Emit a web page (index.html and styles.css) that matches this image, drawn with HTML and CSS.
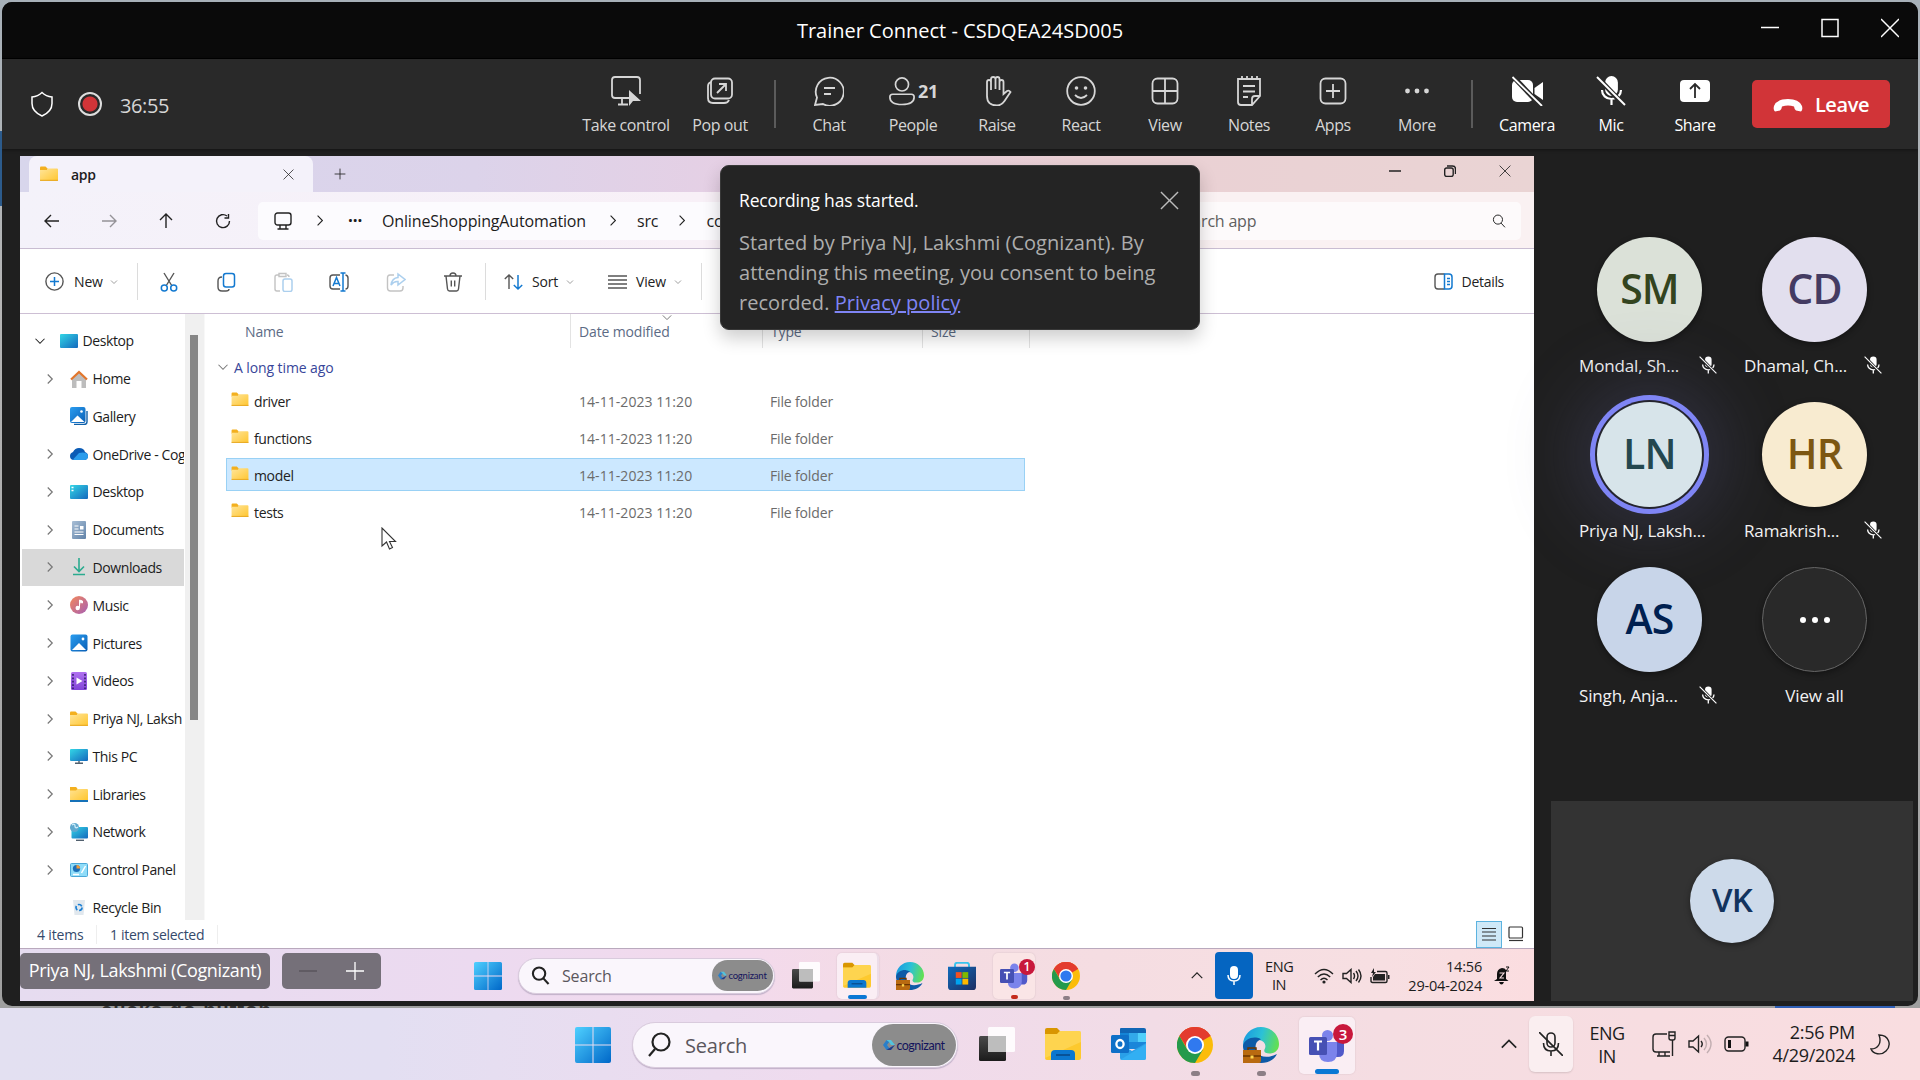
FILE: index.html
```html
<!DOCTYPE html>
<html lang="en">
<head>
<meta charset="utf-8">
<title>Trainer Connect - CSDQEA24SD005</title>
<link rel="stylesheet" href="styles.css">
</head>
<body>
<svg class="defs" width="0" height="0" aria-hidden="true">
  <defs>
    <linearGradient id="gWin" x1="0" y1="0" x2="1" y2="1"><stop offset="0" stop-color="#4fd0ff"/><stop offset="1" stop-color="#0067c8"/></linearGradient>
    <linearGradient id="gFolder" x1="0" y1="0" x2="1" y2="1"><stop offset="0" stop-color="#ffe59a"/><stop offset="1" stop-color="#ffc62f"/></linearGradient>
    <linearGradient id="gDesk" x1="0" y1="0" x2="1" y2="1"><stop offset="0" stop-color="#33d6e6"/><stop offset="1" stop-color="#1468bd"/></linearGradient>
    <linearGradient id="gBlue" x1="0" y1="0" x2="1" y2="1"><stop offset="0" stop-color="#2a9df0"/><stop offset="1" stop-color="#0a5fb5"/></linearGradient>
    <linearGradient id="gMusic" x1="0" y1="0" x2="1" y2="1"><stop offset="0" stop-color="#f4885a"/><stop offset="1" stop-color="#a65fb4"/></linearGradient>
    <linearGradient id="gEdge" x1="0" y1="0.3" x2="1" y2="0.5"><stop offset="0" stop-color="#1a9be0"/><stop offset=".5" stop-color="#2cc1d6"/><stop offset="1" stop-color="#63e052"/></linearGradient>
    <linearGradient id="gStore" x1="0" y1="0" x2="1" y2="1"><stop offset="0" stop-color="#0f6cbd"/><stop offset="1" stop-color="#1d2f63"/></linearGradient>
    <linearGradient id="gDoc" x1="0" y1="0" x2="1" y2="1"><stop offset="0" stop-color="#a9bfd6"/><stop offset="1" stop-color="#6082a8"/></linearGradient>
    <linearGradient id="gVid" x1="0" y1="0" x2="0" y2="1"><stop offset="0" stop-color="#b070f0"/><stop offset="1" stop-color="#8145d8"/></linearGradient>
    <linearGradient id="gDark" x1="0" y1="0" x2="0" y2="1"><stop offset="0" stop-color="#4a4a4a"/><stop offset="1" stop-color="#1b1b1b"/></linearGradient>
  </defs>
  <symbol id="winlogo" viewBox="0 0 36 36"><path fill="url(#gWin)" d="M2 0h15.500v17.500H0V2q0-2 2-2zM18.500 0H34q2 0 2 2v15.500H18.500zM0 18.500h17.500V36H2q-2 0-2-2zM18.500 18.500H36V34q0 2-2 2H18.500z"/></symbol>
  <symbol id="taskview" viewBox="0 0 36 36"><rect x="0" y="9" width="27" height="25" rx="1.500" fill="url(#gDark)"/><rect x="9" y="0" width="27" height="25" rx="1.500" fill="#fff" fill-opacity=".88"/><path d="M9 9h18v16H9z" fill="#bdbdbd"/></symbol>
  <symbol id="explorer" viewBox="0 0 36 36"><path d="M0 3q0-2 2-2h10l4 4-3 3H0z" fill="#d99600"/><path d="M0 7h12l3-3h19q2 0 2 2v25q0 2-2 2H2q-2 0-2-2z" fill="#fdc92e"/><path d="M0 7h12l3-3h19q2 0 2 2v9L0 31z" fill="#ffdc66" opacity=".6"/><path d="M6 33v-6q0-4 4-4h16q4 0 4 4v6z" fill="#0b77cf"/><path d="M11 28h14" stroke="#084a8a" stroke-width="1.600"/></symbol>
  <symbol id="chrome" viewBox="0 0 36 36"><circle cx="18" cy="18" r="18" fill="#fbbc09"/><path d="M18 18 2.400 9A18 18 0 0 1 33.600 9z" fill="#e33b2e"/><path d="M18 9h15.600A18 18 0 0 0 2.400 9L10 21z" fill="#e33b2e"/><path d="M2.400 9A18 18 0 0 0 18 36l8-13.500-8 3.500-8-4z" fill="#249a4c"/><circle cx="18" cy="18" r="9" fill="#fff"/><circle cx="18" cy="18" r="7.200" fill="#3079ef"/></symbol>
  <symbol id="edge" viewBox="0 0 36 36"><path d="M0 18C0 8 8 0 18 0s18 8 18 17c0 6-4 9.500-9.500 9.500-4 0-6-1.500-5-4 2-3 1-9-6-9.500C8 13 2 16 0 22z" fill="url(#gEdge)"/><path d="M0 19c1-6 7-9 13-8.500 4 .5 5 2 5 2-5 1-7 7-4 12.500 3 6 12 6 20 2-3 6-9 9-16 9C8 36 0 28 0 19z" fill="#0e5aa7"/><path d="M0 23h18v10.500q0 2.500-2 2.500H0z" fill="#b96a10"/><path d="M5 23v-2h8v2M0 29h18" stroke="#6b3500" stroke-width="1.500" fill="none"/><rect x="7.500" y="28.500" width="3" height="3" fill="#ffd54a"/></symbol>
  <symbol id="store" viewBox="0 0 36 36"><path d="M9 8V4q0-3 3-3h12q3 0 3 3v4" stroke="#38c3ee" stroke-width="2.500" fill="none"/><path d="M0 6h36v26q0 4-4 4H4q-4 0-4-4z" fill="url(#gStore)"/><path d="M10 13h7.500v7.500H10z" fill="#f25022"/><path d="M18.500 13H26v7.500h-7.500z" fill="#7fba00"/><path d="M10 21.500h7.500V29H10z" fill="#00a4ef"/><path d="M18.500 21.500H26V29h-7.500z" fill="#ffb900"/></symbol>
  <symbol id="teams" viewBox="0 0 36 36"><circle cx="18.500" cy="7.500" r="5.500" fill="#7b83eb"/><circle cx="30" cy="9" r="4" fill="#5059c9"/><path d="M24 14h11v9q0 6-6 6h-5z" fill="#5059c9"/><path d="M10 14h18v11q0 9-9 9t-9-9z" fill="#7b83eb"/><rect y="9" width="18" height="18" rx="1.500" fill="#4650b4"/><path d="M5 13.500h8M9 13.500v9" stroke="#fff" stroke-width="2.200"/></symbol>
  <symbol id="outlook" viewBox="0 0 36 36"><path d="M9 2q0-1 1-1h23q2 0 2 2v18H9z" fill="#1066b5"/><path d="M9 6h9v9H9z" fill="#1484d6"/><path d="M18 6h8.500v9H18z" fill="#32a9ea"/><path d="M26.500 6H35v9h-8.500z" fill="#50d0fb"/><path d="M18 15h17v7H18z" fill="#1a86d9"/><path d="M9 17l12 7 14-8v15q0 2-2 2H11q-2 0-2-2z" fill="#2aa0e8"/><path d="M9 33 35 17v14q0 2-2 2z" fill="#35b3f5" opacity=".8"/><rect y="8" width="18" height="18" rx="1.500" fill="#0f70c8"/><ellipse cx="9" cy="17" rx="3.600" ry="4" fill="none" stroke="#fff" stroke-width="2.300"/></symbol>
  <symbol id="hex" viewBox="0 0 12 12"><path d="M0 6 3.500 1l3 1.500L4 6l2.500 3.500L3.500 11z" fill="#2a7fc9"/><path d="M3.500 1H8l4 5H8L6 3z" fill="#53c3dd"/><path d="M12 6 8 11H3.500L8 8z" fill="#1c3a8c"/></symbol>

  <symbol id="mag" viewBox="0 0 20 20"><circle cx="8.500" cy="8" r="6.500"/><path d="M13 13l5.500 6"/></symbol>
  <symbol id="magL" viewBox="0 0 24 28"><circle cx="14" cy="11" r="8.500"/><path d="M8 18 2 25"/></symbol>
  <symbol id="x" viewBox="0 0 20 20"><path d="M1 1l18 18M19 1 1 19"/></symbol>
  <symbol id="plus" viewBox="0 0 20 20"><path d="M10 1v18M1 10h18"/></symbol>
  <symbol id="right" viewBox="0 0 10 16"><path d="M2 2l6 6-6 6"/></symbol>
  <symbol id="down" viewBox="0 0 16 10"><path d="M2 2l6 6 6-6"/></symbol>
  <symbol id="up" viewBox="0 0 16 10"><path d="M2 8l6-6 6 6"/></symbol>
  <symbol id="arrow" viewBox="0 0 16 16"><path d="M15 8H1M7 2 1 8l6 6"/></symbol>
  <symbol id="folder" viewBox="0 0 18 16"><path d="M0 1.500Q0 .5 1 .5h4.500l2 2V5H0z" fill="#f3b01f"/><path d="M0 4h7l1-1.500h9q1 0 1 1V14q0 1-1 1H1q-1 0-1-1z" fill="url(#gFolder)"/><path d="M0 14.300h18" stroke="#e6a722" stroke-width="1"/></symbol>

  <symbol id="micoff" viewBox="0 0 30 30"><rect x="10" y="1" width="11" height="18" rx="5.500" fill="currentColor"/><path d="M6 14c0 5 4 9 9.500 9s9.500-4 9.500-9M15.500 23v6" fill="none" stroke="currentColor" stroke-width="2.200"/><path d="M1.500 1.500l27 28" stroke="var(--cut,#292929)" stroke-width="5"/><path d="M1 1l28 28" stroke="currentColor" stroke-width="1.900"/></symbol>
</svg>

<div class="desktop">
  <div class="behind"><span class="behind-text">clicks go button</span><span class="behind-left"></span><span class="behind-blue"></span></div>

  <main class="meeting">
    <header class="titlebar">
      <h1>Trainer Connect - CSDQEA24SD005</h1>
      <div class="win-ctl">
        <svg class="ln" width="18" height="22" viewBox="0 0 18 22"><path d="M0 10.500h18"/></svg>
        <svg class="ln" width="18" height="22" viewBox="0 0 18 22"><path d="M1 2.500h16v17H1z"/></svg>
        <svg class="ln" width="18" height="22" viewBox="0 0 18 22"><path d="M0 2l18 18M18 2 0 20"/></svg>
      </div>
    </header>

    <nav class="toolbar">
      <div class="rec">
        <svg class="ln" width="24" height="26" viewBox="0 0 24 26"><path d="M12 1.500q4 4 10 4.500v6.500q0 8-10 12.500-10-4.500-10-12.500V6q6-.5 10-4.500z"/></svg>
        <span class="recdot"></span><span class="clock">36:55</span>
      </div>
      <div class="tool tool-wide"><svg class="ico" viewBox="0 0 30 30"><path d="M18 22H4q-3 0-3-3V4q0-3 3-3h22q3 0 3 3v14M11 22v6M7 28.500h10"/><path d="M18 14v16l4-5h8z" fill="currentColor" stroke="none"/></svg><span>Take control</span></div>
      <div class="tool tool-pop"><svg class="ico" viewBox="0 0 30 30"><rect x="6" y="2.500" width="21" height="20" rx="4"/><path d="M6 6q-3 1-3 4v12q0 5 5 5h11q4 0 5-3M12 17l9-9M14 8h7v7"/></svg><span>Pop out</span></div>
      <i class="sep"></i>
      <div class="tool"><svg class="ico" viewBox="0 0 30 30"><path d="M1 29l2-7.500A14 14 0 1 1 9 28z"/><path d="M10 12h11M10 18h7"/></svg><span>Chat</span></div>
      <div class="tool"><div class="people"><svg class="ico" viewBox="0 0 30 30"><circle cx="15" cy="8" r="7"/><path d="M5 18.500h20q3 0 3 3 0 8-13 8t-13-8q0-3 3-3z"/></svg><b>21</b></div><span>People</span></div>
      <div class="tool"><svg class="ico" viewBox="0 0 30 30"><path d="M5 16V6q0-2 2-2t2 2v8V3q0-2 2.200-2T13.500 3v10V3q0-2 2-2t2 2v11V6q0-2 2-2t2 2v12l3.500-3q2-1 3.500 1l-6 9q-3 4.500-7.500 4.500Q5 29.500 5 20z"/></svg><span>Raise</span></div>
      <div class="tool"><svg class="ico" viewBox="0 0 30 30"><circle cx="15" cy="15" r="13.800"/><path d="M9 19q6 6 12 0"/><circle cx="10.500" cy="12" r="1.800" fill="currentColor" stroke="none"/><circle cx="19.500" cy="12" r="1.800" fill="currentColor" stroke="none"/></svg><span>React</span></div>
      <div class="tool"><svg class="ico" viewBox="0 0 30 30"><rect x="2.500" y="2.500" width="25" height="25" rx="5"/><path d="M15 2.500v25M2.500 15h25"/></svg><span>View</span></div>
      <div class="tool"><svg class="ico" viewBox="0 0 30 30"><path d="M4 3h22v17l-8 9H7q-3 0-3-3zM18 29v-6q0-3 3-3h5M8 0v4M13 0v4M18 0v4M23 0v4M9 10h12M9 15.500h12M9 21h5"/></svg><span>Notes</span></div>
      <div class="tool"><svg class="ico" viewBox="0 0 30 30"><rect x="2.500" y="2.500" width="25" height="25" rx="5"/><path d="M15 8v14M8 15h14"/></svg><span>Apps</span></div>
      <div class="tool"><svg class="ico" viewBox="0 0 30 30"><g fill="currentColor" stroke="none"><circle cx="5.500" cy="15" r="2.400"/><circle cx="15" cy="15" r="2.400"/><circle cx="24.500" cy="15" r="2.400"/></g></svg><span>More</span></div>
      <i class="sep sep-2"></i>
      <div class="tool hot"><svg class="ico cam" viewBox="0 0 32 30"><g fill="currentColor" stroke="none"><rect x="1" y="4" width="21" height="22" rx="5"/><path d="M23.500 12 32 6v18l-8.500-6z"/></g><path d="M2.500 1 31 31" stroke="#292929" stroke-width="5"/><path d="M1.500 1 31 30"/></svg><span>Camera</span></div>
      <div class="tool hot"><svg class="ico"><use href="#micoff"/></svg><span>Mic</span></div>
      <div class="tool hot"><svg class="ico cam" viewBox="0 0 32 30"><rect x="1" y="4" width="30" height="22" rx="4" fill="currentColor" stroke="none"/><path d="M16 22V8.500M11 13l5-5 5 5" stroke="#292929"/></svg><span>Share</span></div>
      <button class="leave"><svg width="30" height="14" viewBox="0 0 30 14"><path d="M1 8Q4 1 15 1t14 7q1 4-1 5.500l-5-1q-1.500-.5-2-4-6-2-12 0-.5 3.500-2 4l-5 1Q0 12 1 8z" fill="#fff"/></svg>Leave</button>
    </nav>

    <div class="stage">
      <section class="shared">
        <div class="tabs">
          <div class="tab"><svg width="18" height="16"><use href="#folder"/></svg><b>app</b><svg class="dk tabx" width="11" height="11"><use href="#x"/></svg></div>
          <svg class="dk" width="12" height="12"><use href="#plus"/></svg>
          <div class="ctl">
            <svg class="dk" width="12" height="12" viewBox="0 0 12 12"><path d="M0 6h12"/></svg>
            <svg class="dk" width="12" height="12" viewBox="0 0 12 12"><rect x=".7" y="3" width="8.500" height="8.500" rx="2"/><path d="M3 1h5.500q3 0 3 3v5"/></svg>
            <svg class="dk" width="12" height="12"><use href="#x"/></svg>
          </div>
        </div>

        <div class="nav">
          <div class="navbtns">
            <svg class="dk" width="16" height="16"><use href="#arrow"/></svg>
            <svg class="dk fwd" width="16" height="16"><use href="#arrow"/></svg>
            <svg class="dk upw" width="16" height="16"><use href="#arrow"/></svg>
            <svg class="dk" width="16" height="16" viewBox="0 0 16 16"><path d="M14.500 8A6.500 6.500 0 1 1 12 3M13.500 1v4H9.500"/></svg>
          </div>
          <div class="address">
            <svg class="dk" width="18" height="18" viewBox="0 0 18 18"><rect x="1" y="1" width="16" height="12" rx="2.500"/><path d="M6 13v3.500M12 13v3.500M3.500 17h11"/></svg>
            <svg class="dk" width="8" height="13"><use href="#right"/></svg>
            <span class="dots">···</span>
            <span class="crumb">OnlineShoppingAutomation</span>
            <svg class="dk" width="8" height="13"><use href="#right"/></svg>
            <span>src</span>
            <svg class="dk" width="8" height="13"><use href="#right"/></svg>
            <span>com</span>
          </div>
          <div class="find"><span>Search app</span><svg class="dk" width="14" height="14"><use href="#mag"/></svg></div>
        </div>

        <div class="cmd">
          <div class="cmd-new"><svg width="19" height="19" viewBox="0 0 19 19"><circle cx="9.500" cy="9.500" r="8.600" class="g"/><path d="M9.500 5v9M5 9.500h9" class="b"/></svg><span>New</span><svg class="dk thin" width="8" height="6"><use href="#down"/></svg></div>
          <i></i>
          <div class="cmd-icons">
            <svg width="20" height="20" viewBox="0 0 20 20"><path d="M5 1l8 13M15 1 7 14" class="g"/><circle cx="5.300" cy="16" r="3" class="b"/><circle cx="14.700" cy="16" r="3" class="b"/></svg>
            <svg width="20" height="20" viewBox="0 0 20 20"><path d="M6 5q-4 0-4 4v6q0 4 4 4h4q3 0 3-2" class="g"/><rect x="7.500" y="1.500" width="11" height="13.500" rx="2.500" class="b"/></svg>
            <svg class="off" width="20" height="20" viewBox="0 0 20 20"><path d="M6 3H4q-2 0-2 2v12q0 2 2 2h3M14 3q2 0 2 2M6 1.500h7v3H6z" class="g"/><rect x="10" y="7" width="9" height="12.500" rx="2" class="b"/></svg>
            <svg width="20" height="20" viewBox="0 0 20 20"><path d="M11 3H4Q1 3 1 6v8q0 3 3 3h7M16.500 3Q19 3.500 19 6v8q0 3-2.500 3" class="g"/><path d="M4 14 7.500 5.500 11 14M5 11.500h5M14 1v18M11.500 1h5M11.500 19h5" class="b"/></svg>
            <svg class="off" width="20" height="20" viewBox="0 0 20 20"><path d="M8 3H4Q1.500 3 1.500 6v10q0 3 3 3H14q3 0 3-3v-2" class="g"/><path d="M12 2v3.500Q6 6 5 13q3-4 7-3.500V13l7-5.500z" class="b"/></svg>
            <svg width="20" height="20" viewBox="0 0 20 20"><path d="M1 4h18M3 4l1.500 13q.3 2 2 2h7q1.700 0 2-2L17 4M7 4q0-3 3-3t3 3M8.300 8.500v6M11.700 8.500v6" class="g"/></svg>
          </div>
          <i></i>
          <div class="cmd-sort"><svg width="19" height="18" viewBox="0 0 19 18"><path d="M5 16V2M.8 6 5 2l4.200 4" class="g"/><path d="M14 2v14M9.800 12l4.200 4 4.200-4" class="b"/></svg><span>Sort</span><svg class="dk thin" width="8" height="6"><use href="#down"/></svg></div>
          <div class="cmd-view"><svg width="19" height="14" viewBox="0 0 19 14"><path d="M0 1h19M0 5h19M0 9h19M0 13h19" class="g"/></svg><span>View</span><svg class="dk thin" width="8" height="6"><use href="#down"/></svg></div>
          <i></i>
          <div class="cmd-details"><svg width="19" height="17" viewBox="0 0 19 17"><path d="M10.500 1H4Q1 1 1 4v9q0 3 3 3h6.500" class="g"/><path d="M10.500 1H15q3 0 3 3v9q0 3-3 3h-4.500zM13 5.500h3M13 8.500h3M13 11.500h3" class="b"/></svg><span>Details</span></div>
        </div>

        <div class="panes">
          <aside class="tree">
            <div class="node root"><svg class="dk" width="12" height="8"><use href="#down"/></svg><svg class="ni" viewBox="0 0 18 18"><rect y="2" width="18" height="14" rx="1" fill="url(#gDesk)"/></svg><span>Desktop</span></div>
            <div class="node"><svg class="tw"><use href="#right"/></svg><svg class="ni" viewBox="0 0 18 18"><path d="M2 8l7-6 7 6v10h-4.500v-7h-5v7H2z" fill="#bdbdbd"/><path d="M1 9.500 9 2l8 7.500" fill="none" stroke="#e2762c" stroke-width="2.200"/></svg><span>Home</span></div>
            <div class="node"><em class="tw"></em><svg class="ni" viewBox="0 0 18 18"><path d="M17 4v11q0 2.500-3 2.500H4" fill="none" stroke="#1060a8" stroke-width="1.400"/><rect width="15.500" height="16" rx="2" fill="url(#gBlue)"/><path d="M1 15l6.500-6.500L14.500 15z" fill="#fff"/><circle cx="11.500" cy="4.500" r="1.300" fill="#fff"/></svg><span>Gallery</span></div>
            <div class="node"><svg class="tw"><use href="#right"/></svg><svg class="ni" viewBox="0 0 18 18"><path d="M0 11q0-3 3-4 2-4 6-4 5 0 6 4 3 1 3 4 0 4-4 4H4q-4 0-4-4z" fill="#0a5bb5"/><path d="M3 14.500 9 8q4-1 7 0 2 1 2 3 0 4-4 4H4z" fill="#2a9cec"/></svg><span>OneDrive - Cognizant</span></div>
            <div class="node"><svg class="tw"><use href="#right"/></svg><svg class="ni" viewBox="0 0 18 18"><rect y="2" width="18" height="14" rx="1" fill="url(#gDesk)"/><path d="M1.500 4.500h2M1.500 7.500h2" stroke="#fff" stroke-width="1.400"/></svg><span>Desktop</span></div>
            <div class="node"><svg class="tw"><use href="#right"/></svg><svg class="ni" viewBox="0 0 18 18"><rect x="2" width="14" height="18" rx="1" fill="url(#gDoc)"/><path d="M4.500 5h4M4.500 8h4M4.500 11h9M4.500 13.500h9" stroke="#fff" stroke-width="1.100"/><path d="M10 5h3.500v3.500H10z" fill="#fff"/></svg><span>Documents</span></div>
            <div class="node sel"><svg class="tw"><use href="#right"/></svg><svg class="ni" viewBox="0 0 18 18"><path d="M9 0v13M4 8.500 9 13.500l5-5M3 16.500h12" fill="none" stroke="#2bab8f" stroke-width="1.600"/></svg><span>Downloads</span></div>
            <div class="node"><svg class="tw"><use href="#right"/></svg><svg class="ni" viewBox="0 0 18 18"><circle cx="9" cy="9" r="9" fill="url(#gMusic)"/><path d="M9.500 12V4l3 1v2l-2-.6" fill="#fff" stroke="#fff"/><circle cx="7.700" cy="12" r="2.200" fill="#fff"/></svg><span>Music</span></div>
            <div class="node"><svg class="tw"><use href="#right"/></svg><svg class="ni" viewBox="0 0 18 18"><rect x=".5" y=".5" width="17" height="17" rx="2" fill="url(#gBlue)"/><path d="M2 16l7-7 7 7z" fill="#fff"/><circle cx="13" cy="5" r="1.400" fill="#fff"/></svg><span>Pictures</span></div>
            <div class="node"><svg class="tw"><use href="#right"/></svg><svg class="ni" viewBox="0 0 18 18"><rect x="1" width="16" height="18" rx="1.500" fill="url(#gVid)"/><path d="M3 2v15M15 2v15" stroke="#32206b" stroke-width="1.600" stroke-dasharray="1.800 1.600"/><path d="M6.500 5.500v7l6-3.500z" fill="#fff"/></svg><span>Videos</span></div>
            <div class="node"><svg class="tw"><use href="#right"/></svg><svg class="ni"><use href="#folder"/></svg><span>Priya NJ, Laksh</span></div>
            <div class="node"><svg class="tw"><use href="#right"/></svg><svg class="ni" viewBox="0 0 18 18"><rect y="2" width="18" height="12" rx="1" fill="url(#gDesk)"/><path d="M9 14v2M5 16.300h8" stroke="#51606e" stroke-width="1.400"/></svg><span>This PC</span></div>
            <div class="node"><svg class="tw"><use href="#right"/></svg><svg class="ni" viewBox="0 0 18 18"><path d="M0 2h6l1.500 2H17q1 0 1 1v10H0z" fill="url(#gFolder)"/><path d="M0 2h6l1.500 2L6 5.500H0z" fill="#f3b01f"/><path d="M0 16h18" stroke="#1571b8" stroke-width="2"/></svg><span>Libraries</span></div>
            <div class="node"><svg class="tw"><use href="#right"/></svg><svg class="ni" viewBox="0 0 18 18"><rect x="1.500" y="4" width="16.500" height="11.500" rx="1" fill="url(#gDesk)"/><circle cx="4.500" cy="4.500" r="4.500" fill="#5fa9cf"/><path d="M2 2q3-2 3 1t3 1" stroke="#d3f0fb" stroke-width="1.300" fill="none"/><path d="M6 17.300h8" stroke="#51606e" stroke-width="1.400"/></svg><span>Network</span></div>
            <div class="node"><svg class="tw"><use href="#right"/></svg><svg class="ni" viewBox="0 0 18 18"><rect x=".5" y="2.500" width="17" height="13" rx="1" fill="#8fdcf8" stroke="#4aa8d8"/><circle cx="6.500" cy="7.500" r="3.600" fill="#1c6fb8"/><path d="M6.500 7.500V3.900a3.600 3.600 0 0 1 3.600 3.600z" fill="#f29b38"/><path d="M3 13.500h6M11.500 12l4-7" stroke="#fff" stroke-width="1.500"/></svg><span>Control Panel</span></div>
            <div class="node"><em class="tw"></em><svg class="ni" viewBox="0 0 18 18"><path d="M3 2h12l-1.500 15h-9z" fill="#e1e8ee"/><circle cx="9" cy="9.500" r="3" fill="none" stroke="#1b7fd4" stroke-width="1.700" stroke-dasharray="4.500 1.800"/></svg><span>Recycle Bin</span></div>
          </aside>
          <div class="track"><div class="thumb"></div></div>
          <div class="files">
            <div class="fhead"><span class="c-name">Name</span><span class="c-date">Date modified<svg class="dk thin sortmark" width="12" height="7"><use href="#down"/></svg></span><span class="c-type">Type</span><span class="c-size">Size</span></div>
            <div class="group"><svg class="dk thin" width="12" height="8"><use href="#down"/></svg>A long time ago</div>
            <div class="row"><svg><use href="#folder"/></svg><span class="fn">driver</span><span class="fd">14-11-2023 11:20</span><span>File folder</span></div>
            <div class="row"><svg><use href="#folder"/></svg><span class="fn">functions</span><span class="fd">14-11-2023 11:20</span><span>File folder</span></div>
            <div class="row picked"><svg><use href="#folder"/></svg><span class="fn">model</span><span class="fd">14-11-2023 11:20</span><span>File folder</span></div>
            <div class="row"><svg><use href="#folder"/></svg><span class="fn">tests</span><span class="fd">14-11-2023 11:20</span><span>File folder</span></div>
          </div>
        </div>

        <div class="status"><span class="st1">4 items</span><span class="st2">1 item selected</span>
          <div class="modes"><b><svg width="14" height="14" viewBox="0 0 14 14"><path d="M0 1.500h14M0 5h14M0 9h14M0 13h14"/></svg></b><svg width="16" height="16" viewBox="0 0 16 16"><rect x="1" y="1" width="13.500" height="11" rx="1"/><path d="M1 14.500h14"/></svg></div>
        </div>

        <div class="bar bar-in">
          <span class="slot"><svg class="ap"><use href="#winlogo"/></svg></span>
          <div class="search"><svg class="mg"><use href="#mag"/></svg><span>Search</span><em><svg><use href="#hex"/></svg>cognizant</em></div>
          <span class="slot"><svg class="ap"><use href="#taskview"/></svg></span>
          <span class="slot"><span class="lit pile"><svg class="ap"><use href="#explorer"/></svg><u class="blue"></u></span></span>
          <span class="slot"><svg class="ap"><use href="#edge"/></svg></span>
          <span class="slot"><svg class="ap"><use href="#store"/></svg></span>
          <span class="slot"><span class="lit warm"><svg class="ap"><use href="#teams"/></svg><u class="red"></u><sup>1</sup></span></span>
          <span class="slot"><svg class="ap"><use href="#chrome"/></svg><u></u></span>
          <div class="tray">
            <svg class="dk t-up" width="14" height="9"><use href="#up"/></svg>
            <span class="bluemic"><svg width="14" height="20" viewBox="0 0 14 20"><rect x="3" y="0" width="8" height="13" rx="4" fill="#fff"/><path d="M1 9q0 6 6 6t6-6M7 15v4" fill="none" stroke="#fff" stroke-width="1.500"/></svg></span>
            <span class="lang">ENG<br>IN</span>
            <svg class="dk" width="20" height="16" viewBox="0 0 20 16"><path d="M1 6q9-9 18 0M3.800 9q6.200-6 12.400 0M6.500 12q3.500-3.500 7 0"/><circle cx="10" cy="14" r="1.600" fill="#222" stroke="none"/></svg>
            <svg class="dk" width="20" height="16" viewBox="0 0 20 16"><path d="M1 5.500v5h3.500l4.500 4v-13l-4.500 4zM11.500 5q2 3 0 6M14 3q4 5 0 10M16.500 1.500q5 6.500 0 13"/></svg>
            <svg class="dk" width="20" height="16" viewBox="0 0 20 16"><path d="M7 3.500h8.500q1.500 0 1.500 1.500v8q0 1.500-1.500 1.500h-13Q1 14.500 1 13V9"/><path d="M5 6h10v6.500H3V9zM18 7h1.500v4H18zM4 0 1 5h2L2 9l4-5H4z" fill="#222" stroke="none"/></svg>
            <span class="when">14:56<br>29-04-2024</span>
            <svg class="bell" width="16" height="19" viewBox="0 0 16 19"><path d="M3 13V8q0-5 5-6 3 0 4 2v9l2.500 2H0zM5 16h5q-1 2.500-2.500 2.500T5 16z" fill="#111"/><path d="M5.500 7H10l-4 5h4" stroke="#fbdfe2" stroke-width="1.100" fill="none"/><path d="M12 1h3l-3 4h3" stroke="#111" fill="none"/></svg>
          </div>
          <div class="presenter">Priya NJ, Lakshmi (Cognizant)</div>
          <div class="zoomer"><svg width="18" height="18" viewBox="0 0 18 18"><path d="M0 9h18" stroke="#5a555c" stroke-width="1.500"/></svg><svg width="18" height="18" viewBox="0 0 18 18"><path d="M0 9h18M9 0v18" stroke="#fff" stroke-width="1.300"/></svg></div>
        </div>
        <svg class="cursor" width="16" height="23" viewBox="0 0 16 23"><path d="M1 1v18l4.500-4 3 7 3-1.500-3-6h6z" fill="#fff" stroke="#333" stroke-width="1.100"/></svg>
      </section>

      <aside class="people-pane">
        <div class="roster">
          <div class="person"><div class="av sm">SM</div><p><span>Mondal, Sh...</span><svg><use href="#micoff"/></svg></p></div>
          <div class="person"><div class="av cd">CD</div><p><span>Dhamal, Ch...</span><svg><use href="#micoff"/></svg></p></div>
          <div class="person"><div class="av ln-av">LN</div><p><span>Priya NJ, Laksh...</span></p></div>
          <div class="person"><div class="av hr">HR</div><p><span>Ramakrish...</span><svg><use href="#micoff"/></svg></p></div>
          <div class="person"><div class="av as">AS</div><p><span>Singh, Anja...</span><svg><use href="#micoff"/></svg></p></div>
          <div class="person"><div class="av all"><i></i><i></i><i></i></div><p class="mid"><span>View all</span></p></div>
        </div>
        <div class="self"><div class="av vk">VK</div></div>
      </aside>

      <div class="toast">
        <header><h2>Recording has started.</h2><svg class="ln" width="19" height="19"><use href="#x"/></svg></header>
        <p>Started by Priya NJ, Lakshmi (Cognizant). By<br>attending this meeting, you consent to being<br>recorded. <a>Privacy policy</a></p>
      </div>
    </div>
  </main>

  <footer class="bar bar-out">
    <span class="slot"><svg class="ap"><use href="#winlogo"/></svg></span>
    <div class="search"><svg class="mg"><use href="#magL"/></svg><span>Search</span><em><svg><use href="#hex"/></svg>cognizant</em></div>
    <span class="slot"><svg class="ap"><use href="#taskview"/></svg></span>
    <span class="slot"><svg class="ap"><use href="#explorer"/></svg></span>
    <span class="slot"><svg class="ap"><use href="#outlook"/></svg></span>
    <span class="slot"><svg class="ap"><use href="#chrome"/></svg><u></u></span>
    <span class="slot"><svg class="ap"><use href="#edge"/></svg><u></u></span>
    <span class="slot"><span class="lit"><svg class="ap"><use href="#teams"/></svg><u class="blue"></u><sup>3</sup></span></span>
    <div class="tray">
      <svg class="dk t-up" width="20" height="12"><use href="#up"/></svg>
      <span class="micbox"><svg width="24" height="24" viewBox="0 0 24 24"><rect x="8" y="1" width="8" height="14" rx="4"/><path d="M4.500 11q0 8 7.500 8t7.500-8M12 19v5M0 0l24 24"/></svg></span>
      <span class="lang">ENG<br>IN</span>
      <svg class="dk" width="24" height="26" viewBox="0 0 24 26"><path d="M15 3H4Q1 3 1 6v12q0 3 3 3h14M7 21v4M13 21v4M5 25h13M17 1h6v6q0 2-2 2h-2q-2 0-2-2zM17 4.500h6M20.500 9v16"/></svg>
      <svg class="dk" width="24" height="20" viewBox="0 0 24 20"><path d="M1 7v6h4l5.500 5V2L5 7zM13 7q2.500 3 0 6"/><path d="M16 4q5 6 0 12M19 1q8 9 0 18" opacity=".25"/></svg>
      <svg class="dk" width="25" height="16" viewBox="0 0 25 16"><rect x="1" y="1" width="20" height="14" rx="3.500"/><path d="M4 4h3v8H4zM21.500 5.500h3v5h-3z" fill="#111" stroke="none"/></svg>
      <span class="when">2:56 PM<br>4/29/2024</span>
      <svg class="dk" width="20" height="21" viewBox="0 0 20 21"><path d="M9 1c10 0 13 10 7 16-5 5-13 3-15-2 7 0 11-6 8-14z"/></svg>
    </div>
  </footer>
</div>
</body>
</html>
```
FILE: styles.css
```css
* { box-sizing: border-box; }
body { margin: 0; font-family: "Open Sans", "Noto Sans", sans-serif; font-size: 15px; color: #1c1c1c; }
h1, h2, p { margin: 0; font-weight: 400; }
i, em, u { font-style: normal; text-decoration: none; }
svg { display: block; flex: none; }
.defs { position: absolute; }

.desktop { position: relative; width: 1920px; height: 1080px; overflow: hidden; display: flex; flex-direction: column; background: #b9bdc0; }
.behind { position: absolute; inset: 0 0 72px 0; overflow: hidden; background: linear-gradient(#a7b0b8, #b5b5b5 30%, #9f9f9f); }
.behind-text { position: absolute; left: 101px; bottom: -12px; font: 700 20px/20px "Liberation Sans", sans-serif; color: #333; letter-spacing: 1.1px; }
.behind-left { position: absolute; left: 0; top: 131px; width: 2px; height: 75px; background: #2c5b8c; }
.behind-blue { position: absolute; left: 1775px; bottom: 0; width: 120px; height: 2px; background: #2f5fb5; }

/* Meeting window */
.meeting { position: relative; margin: 2px 2px 2px; height: 1004px; flex: none; border-radius: 10px; overflow: hidden; background: #1f1f1f; display: flex; flex-direction: column; }
.ln { fill: none; stroke: #fff; stroke-width: 1.5; }
.titlebar { height: 57px; flex: none; background: #0a0a0a; border-bottom: 1px solid #000; display: grid; grid-template-columns: 1fr auto 1fr; align-items: center; color: #fff; }
.titlebar h1 { grid-column: 2; font-size: 20px; }
.win-ctl { justify-self: end; display: flex; gap: 42px; padding: 0 19px 4px 0; }

.toolbar { height: 90px; flex: none; background: #292929; color: #d6d6d6; display: flex; align-items: center; padding-right: 28px; box-shadow: 0 1px 3px #0006; }
.rec { display: flex; align-items: center; width: 576px; padding-left: 28px; }
.recdot { width: 24px; height: 24px; border: 2px solid #ddd; border-radius: 50%; background: radial-gradient(circle, #d13438 0 7px, #292929 8px); margin: 0 18px 0 24px; }
.clock { font-size: 20px; letter-spacing: -.4px; padding-top: 2px; }
.tool { width: 84px; display: flex; flex-direction: column; align-items: center; gap: 8px; font-size: 16px; line-height: 22px; padding-top: 4px; letter-spacing: -.4px; white-space: nowrap; }
.tool-wide { width: 96px; }
.tool-pop { width: 92px; }
.ico { width: 30px; height: 30px; fill: none; stroke: currentColor; stroke-width: 1.8; }
.cam { width: 32px; }
.hot { color: #fff; }
.people { display: flex; align-items: center; gap: 2px; font-size: 18px; }
.people .ico { width: 28px; height: 30px; }
.sep { width: 2px; height: 48px; background: #5b5b5b; margin: 0 11px 0 8px; }
.sep-2 { margin: 0 12px 0 12px; }
.leave { width: 138px; height: 48px; margin-left: auto; border: 0; border-radius: 5px; background: #d13438; color: #fff; font: 600 20px/24px "Open Sans", sans-serif; letter-spacing: -.4px; display: flex; align-items: center; justify-content: center; gap: 12px; padding: 2px 0 0; }

.stage { position: relative; flex: 1; display: flex; padding: 7px 5px 5px 18px; }

/* Shared screen */
.shared { position: relative; width: 1514px; height: 845px; flex: none; background: #fff; display: flex; flex-direction: column; overflow: hidden; font-size: 14px; letter-spacing: -.15px; }
.dk { fill: none; stroke: #222; stroke-width: 1.4; }
.thin { stroke: #777; }
.tabs { height: 36px; flex: none; display: flex; align-items: center; background: linear-gradient(90deg, #d8d6ec, #dcd3ea 30%, #e7cfe3 50%, #ead0d4 70%, #ead4d4); padding-left: 9px; }
.tab { width: 284px; height: 36px; border-radius: 8px 8px 0 0; background: #f4f2fa; display: flex; align-items: center; padding: 0 19px 0 11px; margin-right: 21px; }
.tab b { margin: 0 auto 0 13px; font-weight: 600; letter-spacing: -.3px; }
.ctl { margin-left: auto; display: flex; gap: 43px; padding: 0 23px 6px 0; }
.nav { height: 57px; flex: none; border-bottom: 1px solid #c9bdd2; background: linear-gradient(90deg, #f4f2fa, #f8f0f7 45%, #faf1f2 80%); display: flex; align-items: center; padding-top: 1px; }
.navbtns { display: flex; gap: 41px; padding-left: 24px; width: 238px; }
.fwd { transform: scaleX(-1); opacity: .45; }
.upw { transform: rotate(90deg); }
.address { width: 910px; height: 38px; background: #fcfbfe; border-radius: 5px; display: flex; align-items: center; padding-left: 16px; font-size: 16px; letter-spacing: -.15px; }
.address > svg:nth-of-type(2) { margin: 0 24px 0 24px; }
.address > svg:nth-of-type(3) { margin: 0 20px 0 18px; }
.address > svg:nth-of-type(4) { margin: 0 20px; }
.dots { font-weight: 700; font-size: 17px; width: 34px; }
.address .crumb { width: 209px; white-space: nowrap; }
.find { width: 349px; height: 38px; margin-left: 4px; background: #fdfafb; border-radius: 5px; display: flex; align-items: center; justify-content: space-between; padding: 0 15px 0 3px; color: #5f5f5f; font-size: 16px; letter-spacing: -.2px; }

.cmd { height: 65px; flex: none; border-bottom: 1px solid #cdbfd4; display: flex; align-items: center; color: #222; padding-top: 1px; }
.cmd > i { width: 1px; height: 37px; background: #dcdcdc; }
.cmd > div { display: flex; align-items: center; }
.g { fill: none; stroke: #555; stroke-width: 1.4; }
.b { fill: none; stroke: #1379d0; stroke-width: 1.5; }
.off { opacity: .35; }
.cmd-new { width: 117px; padding-left: 25px; }
.cmd-new span { margin: 0 7px 0 10px; }
.cmd-icons { width: 347px; gap: 36.8px; padding-left: 21px; }
.cmd-sort { width: 103px; padding-left: 18px; }
.cmd-sort span, .cmd-view span { margin: 0 8px 0 9px; }
.cmd-view { width: 112px; padding-left: 19px; }
.cmd-view svg:first-child { width: 19px; }
.cmd-details { margin-left: auto; gap: 9px; padding-right: 30px; letter-spacing: -.3px; }

.panes { height: 606px; flex: none; display: flex; overflow: hidden; }
.tree { width: 164px; overflow: hidden; padding: 8px 0 0 2px; letter-spacing: -.4px; }
.node { height: 37.78px; display: flex; align-items: center; padding-left: 24px; white-space: nowrap; }
.node span { margin-left: 4.5px; }
.node.root { padding-left: 12px; }
.root .ni { margin-left: 14px; }
.ni { width: 18px; height: 18px; }
.tw { width: 8px; height: 12px; fill: none; stroke: #777; stroke-width: 1.6; margin-right: 16px; flex: none; }
.sel { background: #d9d9d9; }
.track { width: 20px; margin-left: 1px; background: #f0f0f0; padding: 21px 6px 0 5px; border-right: 1px solid #f8f8f8; }
.thumb { height: 385px; background: #868686; }
.files { flex: 1; padding-left: 21px; }
.fhead { height: 33px; display: flex; color: #5c6b85; }
.fhead span { position: relative; border-right: 1px solid #e3e3e3; line-height: 36px; padding-left: 8px; height: 34px; }
.fhead .c-name { width: 345px; padding-left: 19px; }
.fhead .c-date { width: 192px; }
.fhead .c-type { width: 160px; }
.fhead .c-size { width: 107px; }
.sortmark { position: absolute; left: 90px; top: 0; }
.group { height: 37px; display: flex; align-items: center; gap: 5px; color: #38469a; padding: 3px 0 0; margin-left: -9px; letter-spacing: -.1px; }
.row { width: 799px; height: 33px; margin-bottom: 4px; display: flex; align-items: center; padding: 2px 0 0 4px; color: #6b6b6b; border: 1px solid transparent; }
.row svg { width: 18px; height: 15px; margin-bottom: 4px; }
.fn { width: 330px; padding-left: 5px; color: #222; letter-spacing: -.35px; }
.fd { width: 191px; letter-spacing: .05px; }
.picked { background: #cce8ff; border-color: #99d1f5; }
.cursor { position: absolute; left: 361px; top: 371px; }

.status { height: 28px; flex: none; display: flex; align-items: center; color: #34496b; padding-left: 17px; letter-spacing: -.3px; }
.status .st1 { width: 60px; border-right: 1px solid #eee; letter-spacing: -.15px; }
.status .st2 { width: 121px; padding-left: 13px; border-right: 1px solid #eee; white-space: nowrap; }
.modes { margin-left: auto; display: flex; align-items: center; gap: 6px; padding-right: 10px; }
.modes b { width: 26px; height: 27px; border: 1.5px solid #5cb3e0; background: #cfe9f8; display: grid; place-items: center; }
.modes svg { fill: none; stroke: #333; stroke-width: 1.2; }

/* Taskbars */
.bar { display: flex; align-items: center; position: relative; }
.slot, .lit { position: relative; display: grid; place-items: center; flex: none; }
.bar u { position: absolute; border-radius: 3px; background: #8c7f86; }
.bar u.blue { background: #0a78d4; }
.bar u.red { background: #c42b1c; }
.lit { background: #fbf3f8cc; border-radius: 5px; box-shadow: 0 0 2px #0002; }
.lit.warm { background: #fae5e6; }
.bar sup { position: absolute; border-radius: 50%; background: #c8183c; color: #fff; font-weight: 600; text-align: center; letter-spacing: 0; }
.search { display: flex; align-items: center; border-radius: 30px; background: #faf6fc; border: 1px solid #d9cbdd; box-shadow: 0 1px 1px #c0b0c8; color: #5a565c; }
.search em { margin-left: auto; border-radius: 30px; background: #8c8c8c; color: #14145c; display: flex; align-items: center; justify-content: center; gap: 1px; font-family: Lato, sans-serif; }
.mg { fill: none; stroke: #222; stroke-width: 2.2; }
.tray { margin-left: auto; display: flex; align-items: center; }
.lang { text-align: center; }
.when { text-align: right; }

.bar-in { height: 54px; flex: none; border-top: 1px solid #b9a9bd; padding-left: 442px; background: linear-gradient(90deg, #e6dcf0, #ecdaf0 30%, #f3daec 48%, #f4dce2 62%, #f7dfe2 90%, #fbdde0); }
.bar-in .slot { width: 52px; height: 52px; }
.bar-in .ap { width: 28px; height: 28px; }
.bar-in .search { width: 257px; height: 36px; margin: 0 5px 0 4px; padding: 0 1px 0 12px; font-size: 16px; }
.bar-in .mg { width: 19px; height: 19px; margin-right: 12px; }
.bar-in .search em { width: 61px; height: 31px; font-size: 9.5px; letter-spacing: -.2px; }
.bar-in .search em svg { width: 9px; height: 9px; }
.bar-in .lit { width: 42px; height: 46px; }
.bar-in .pile { border-right: 2px solid #ecdce8; }
.bar-in u { width: 7px; height: 4px; bottom: 2px; }
.bar-in .lit u { bottom: 0; }
.bar-in u.blue { width: 19px; }
.bar-in sup { width: 16px; height: 16px; font-size: 12px; line-height: 16px; right: 0; top: 6px; }
.bar-in .t-up { margin-right: 11px; }
.bluemic { width: 38px; height: 47px; border-radius: 4px; background: #0565c1; display: grid; place-items: center; margin-right: 12px; }
.bar-in .lang { width: 28px; line-height: 18px; margin-right: 21px; font-size: 14.5px; letter-spacing: -.4px; }
.bar-in .lang ~ .dk { margin-right: 8px; }
.bar-in .when { width: 84px; font-size: 14.5px; line-height: 19px; letter-spacing: -.2px; margin-right: 12px; }
.bell { margin-right: 24px; }
.presenter, .zoomer { position: absolute; top: 4px; height: 36px; border-radius: 5px; background: #757079; color: #fff; }
.presenter { left: 0; width: 250px; text-align: center; font-size: 18px; line-height: 34px; letter-spacing: -.35px; white-space: nowrap; }
.zoomer { left: 262px; width: 99px; display: flex; align-items: center; justify-content: center; gap: 29px; }

.bar-out { height: 72px; flex: none; padding: 2px 0 0 560px; background: linear-gradient(90deg, #e3e0f1, #e3dff2 20%, #efdbee 43%, #f2dce6 60%, #f5dde2 72%, #f9dde0); }
.bar-out .slot { width: 66px; height: 70px; }
.bar-out .ap { width: 36px; height: 36px; }
.bar-out .search { width: 326px; height: 46px; margin: 0 6px; padding: 0 1px 0 14px; font-size: 20px; letter-spacing: -.2px; }
.bar-out .mg { width: 24px; height: 28px; margin-right: 14px; }
.bar-out .search em { width: 84px; height: 42px; font-size: 12.5px; letter-spacing: -.5px; }
.bar-out .search em svg { width: 12px; height: 12px; }
.bar-out .lit { width: 56px; height: 57px; margin-top: 1px; }
.bar-out u { width: 9px; height: 5px; bottom: 4px; }
.bar-out .lit u { bottom: 0; }
.bar-out u.blue { width: 24px; }
.bar-out sup { width: 20px; height: 20px; font-size: 15px; line-height: 20px; right: 2px; top: 7px; }
.bar-out .tray { padding-bottom: 2px; }
.micbox { width: 44px; height: 56px; border-radius: 6px; background: #faeef0; box-shadow: 0 1px 2px #0002; display: grid; place-items: center; margin: 0 15px 0 10px; }
.micbox svg { fill: none; stroke: #222; stroke-width: 1.6; }
.bar-out .lang { width: 38px; font-size: 18px; line-height: 23px; letter-spacing: -.5px; margin-right: 26px; padding-top: 2px; }
.bar-out .lang ~ .dk { margin-right: 12px; }
.bar-out .when { width: 94px; font-size: 18px; line-height: 23px; letter-spacing: -.3px; margin-right: 15px; white-space: nowrap; }
.bar-out .tray .dk:last-child { margin-right: 30px; }

/* Participants */
.people-pane { flex: 1; display: flex; flex-direction: column; justify-content: space-between; padding: 81px 0 0 17px; }
.roster { display: grid; grid-template-columns: 165px 165px; grid-auto-rows: 165px; margin-left: 16px; }
.person { position: relative; display: flex; flex-direction: column; align-items: center; }
.av { width: 105px; height: 105px; border-radius: 50%; display: grid; place-items: center; padding-bottom: 3px; font-size: 41px; font-weight: 600; letter-spacing: -.8px; box-shadow: 0 2px 6px #0006; }
.person p { align-self: stretch; display: flex; justify-content: space-between; align-items: center; margin: 10px 15px 0 12px; height: 26px; color: #f2f2f2; font-size: 17px; letter-spacing: -.15px; white-space: nowrap; }
.person p svg { width: 18px; height: 18px; color: #fff; --cut: #1f1f1f; }
.person p.mid { justify-content: center; margin-right: 12px; }
.sm { background: #dbe1d8; color: #33441f; }
.cd { background: #e2dfee; color: #443b62; }
.ln-av { background: #d7e4ea; color: #24474f; box-shadow: 0 0 0 2px #24242e, 0 0 0 7px #7f85f5, 0 0 70px 22px #54548055; }
.hr { background: #f8ebd0; color: #7d5712; }
.as { background: #c8d5e9; color: #002050; }
.all { background: #292929; border: 1px solid #666; display: flex; justify-content: center; align-items: center; gap: 6px; padding: 0; }
.all i { width: 6px; height: 6px; border-radius: 50%; background: #fff; }
.self { height: 200px; background: #333; display: grid; place-items: center; }
.vk { width: 84px; height: 84px; background: #cddaea; color: #12335e; font-size: 33px; }

.toast { position: absolute; left: 718px; top: 16px; width: 480px; height: 165px; border-radius: 9px; border: 1px solid #383838; background: #242424; color: #adadad; padding: 20px 20px 0 18px; font-size: 20px; letter-spacing: .03px; line-height: 30px; box-shadow: 0 8px 18px #0003; white-space: nowrap; }
.toast header { display: flex; justify-content: space-between; align-items: center; height: 28px; margin-bottom: 14px; color: #fff; }
.toast h2 { font-size: 17.5px; letter-spacing: -.15px; }
.toast header svg { stroke: #bbb; }
.toast a { color: #7f85f5; text-decoration: underline; }
```
